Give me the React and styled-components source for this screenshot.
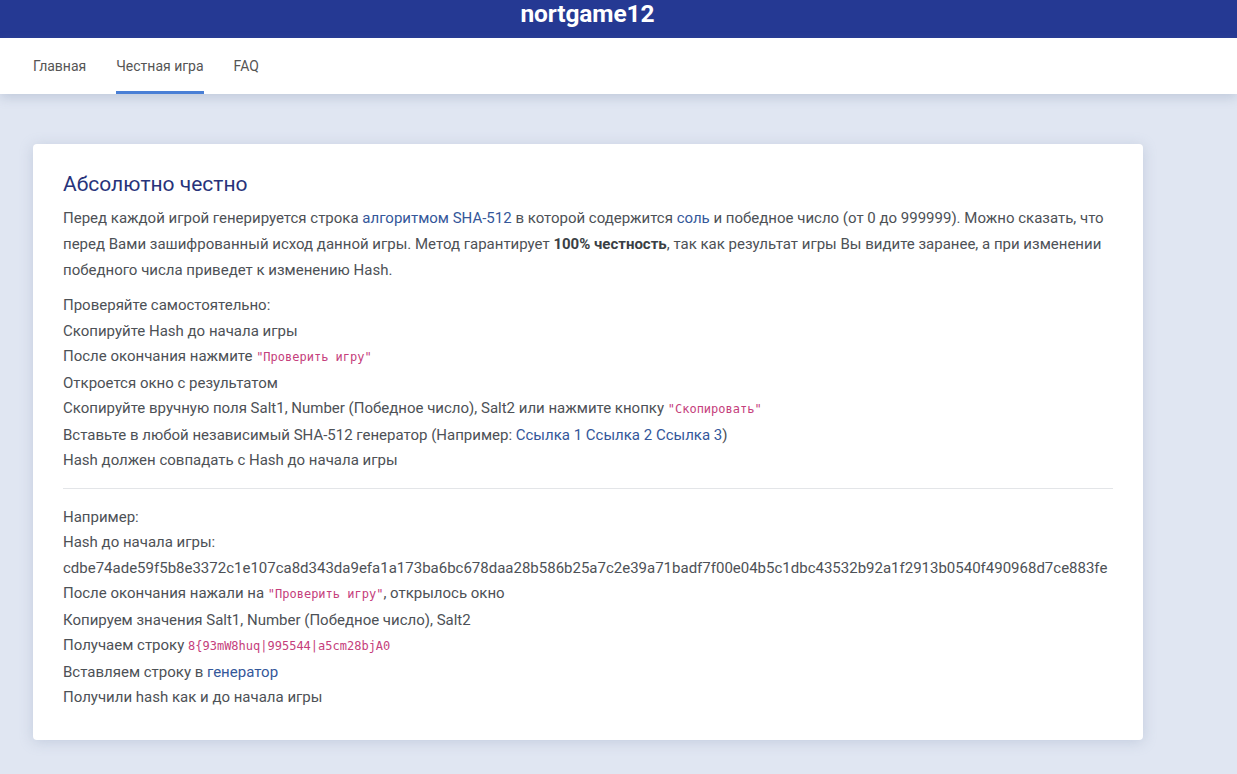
import React from 'react'
import styled, {createGlobalStyle} from 'styled-components'

const GlobalStyle = createGlobalStyle`
  html, body {
    margin: 0;
    padding: 0;
    background: #e0e6f2;
    font-family: Roboto, "Noto Sans", Arial, sans-serif;
  }
  * { box-sizing: border-box; }
`

const navItems = ['Главная', 'Честная игра', 'FAQ']

const App = () => {
  return (
    <Page>
      <GlobalStyle />
      <TopBar>
        <Logo>nortgame12</Logo>
      </TopBar>
      <Nav>
        {navItems.map((item, i) => (
          <NavItem key={item} $active={i === 1}>{item}</NavItem>
        ))}
      </Nav>
      <Main>
        <Card>
          <Title>Абсолютно честно</Title>
          <Text>
            Перед каждой игрой генерируется строка <Link>алгоритмом SHA-512</Link> в которой содержится <Link>соль</Link> и победное число (от 0 до 999999). Можно сказать, что<br />
            перед Вами зашифрованный исход данной игры. Метод гарантирует <b>100% честность</b>, так как результат игры Вы видите заранее, а при изменении<br />
            победного числа приведет к изменению Hash.
          </Text>
          <Lines>
            <Line>Проверяйте самостоятельно:</Line>
            <Line>Скопируйте Hash до начала игры</Line>
            <Line>После окончания нажмите <Code>"Проверить игру"</Code></Line>
            <Line>Откроется окно с результатом</Line>
            <Line>Скопируйте вручную поля Salt1, Number (Победное число), Salt2 или нажмите кнопку <Code>"Скопировать"</Code></Line>
            <Line>Вставьте в любой независимый SHA-512 генератор (Например: <Link>Ссылка 1</Link> <Link>Ссылка 2</Link> <Link>Ссылка 3</Link>)</Line>
            <Line>Hash должен совпадать с Hash до начала игры</Line>
          </Lines>
          <Divider />
          <Lines>
            <Line>Например:</Line>
            <Line>Hash до начала игры:</Line>
            <Line>cdbe74ade59f5b8e3372c1e107ca8d343da9efa1a173ba6bc678daa28b586b25a7c2e39a71badf7f00e04b5c1dbc43532b92a1f2913b0540f490968d7ce883fe</Line>
            <Line>После окончания нажали на <Code>"Проверить игру"</Code>, открылось окно</Line>
            <Line>Копируем значения Salt1, Number (Победное число), Salt2</Line>
            <Line>Получаем строку <Code>8{'{'}93mW8huq|995544|a5cm28bjA0</Code></Line>
            <Line>Вставляем строку в <Link>генератор</Link></Line>
            <Line>Получили hash как и до начала игры</Line>
          </Lines>
        </Card>
      </Main>
    </Page>
  )
}

export default App

const Page = styled.div`
  min-height: 774px;
  background: #e0e6f2;
`

const TopBar = styled.header`
  height: 38px;
  background: #253993;
  display: flex;
  justify-content: center;
  padding-right: 62px;
  overflow: hidden;
`

const Logo = styled.div`
  color: #fff;
  font-size: 24.5px;
  font-weight: 700;
  line-height: 27px;
  letter-spacing: -0.1px;
`

const Nav = styled.nav`
  height: 56px;
  background: #fff;
  display: flex;
  align-items: stretch;
  gap: 30px;
  padding-left: 33px;
  box-shadow: 0 4px 10px rgba(120, 135, 165, 0.28);
  position: relative;
`

const NavItem = styled.a`
  display: flex;
  align-items: center;
  font-size: 14px;
  color: #555;
  border-bottom: 3px solid ${p => (p.$active ? '#4a7fd6' : 'transparent')};
  border-top: 3px solid transparent;
  cursor: pointer;
`

const Main = styled.main`
  padding: 50px 0 34px 33px;
`

const Card = styled.section`
  width: 1110px;
  background: #fff;
  border-radius: 4px;
  box-shadow: 0 2px 14px rgba(130, 145, 175, 0.3);
  padding: 28px 30px 29px;
  color: #4d5156;
  font-size: 15px;
`

const Title = styled.h4`
  margin: 0 0 9px;
  font-size: 21px;
  font-weight: 400;
  line-height: 24px;
  color: #27337a;
`

const Text = styled.p`
  margin: 0 0 10px;
  line-height: 26px;
  white-space: nowrap;

  b {
    font-weight: 700;
    color: #3a3f45;
  }
`

const Lines = styled.div`
  display: flex;
  flex-direction: column;
`

const Line = styled.div`
  line-height: 25.5px;
  white-space: nowrap;
`

const Link = styled.a`
  color: #34579a;
  cursor: pointer;
`

const Code = styled.code`
  font-family: "DejaVu Sans Mono", "Liberation Mono", monospace;
  font-size: 12px;
  color: #c5407c;
`

const Divider = styled.hr`
  border: 0;
  border-top: 1px solid #e3e5e8;
  margin: 14px 0 16px;
`
